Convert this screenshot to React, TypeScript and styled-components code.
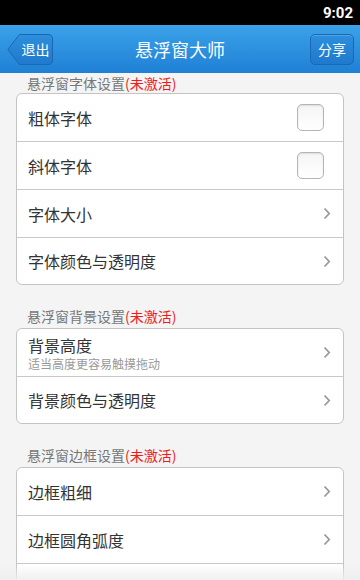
import React from 'react';
import styled, { createGlobalStyle } from 'styled-components';

const GlobalStyle = createGlobalStyle`
  html, body {
    margin: 0;
    padding: 0;
    background: #f4f4f4;
  }
  body {
    font-family: "Noto Sans CJK SC", "Noto Sans", "DejaVu Sans", sans-serif;
  }
`;

const Screen = styled.div`
  position: relative;
  width: 360px;
  height: 580px;
  overflow: hidden;
  background: #f4f4f4;
  display: flex;
  flex-direction: column;
`;

const StatusBar = styled.div`
  height: 25px;
  flex-shrink: 0;
  background: #000;
  display: flex;
  align-items: center;
  justify-content: flex-end;
  padding-right: 7px;
  color: #fff;
  font-family: "Roboto", "DejaVu Sans", sans-serif;
  font-weight: 700;
  font-size: 15px;
`;

const NavBar = styled.div`
  position: relative;
  height: 48px;
  flex-shrink: 0;
  background: linear-gradient(#3ba2e9, #1f80d5);
  display: flex;
  align-items: center;
  justify-content: space-between;
  padding: 0 6px 0 7px;
`;

const Title = styled.div`
  position: absolute;
  left: 0;
  right: 0;
  top: 0;
  bottom: 0;
  display: flex;
  align-items: center;
  justify-content: center;
  color: #fff;
  font-size: 18px;
  pointer-events: none;
`;

const BackButton = styled.button`
  position: relative;
  width: 46px;
  height: 31px;
  padding: 0 0 0 11px;
  border: none;
  background: none;
  color: #fff;
  font-family: inherit;
  font-size: 14px;
  display: flex;
  align-items: center;
  justify-content: center;

  svg {
    position: absolute;
    left: 0;
    top: 0;
  }
  span {
    position: relative;
  }
`;

const ShareButton = styled.button`
  position: relative;
  z-index: 1;
  width: 44px;
  height: 31px;
  padding: 0;
  border: 1px solid #1a68b2;
  border-radius: 5px;
  background: linear-gradient(#2d8fdd, #2079cc);
  box-shadow: inset 0 1px 0 rgba(255, 255, 255, 0.18);
  color: #fff;
  font-family: inherit;
  font-size: 14px;
`;

const Content = styled.div`
  position: relative;
  flex: 1;
  overflow: hidden;
`;

const Section = styled.div``;

const SectionHeader = styled.div<{ $first?: boolean }>`
  padding: ${({ $first }) => ($first ? '0 0 0 27px' : '22px 0 3px 27px')};
  line-height: ${({ $first }) => ($first ? '20px' : '18px')};
  font-size: 14px;
  color: #777;
`;

const Inactive = styled.span`
  color: #f21b1b;
`;

const Card = styled.div`
  margin: 0 16px;
  background: #fff;
  border: 1px solid #c4c4c4;
  border-radius: 6px;
  overflow: hidden;
`;

const Row = styled.div`
  height: 47px;
  display: flex;
  align-items: center;
  padding: 0 12px 0 11px;
  border-bottom: 1px solid #c8c8c8;

  &:last-child {
    height: 46px;
    border-bottom: none;
  }
`;

const RowText = styled.div`
  flex: 1;
  display: flex;
  flex-direction: column;
`;

const RowTitle = styled.div`
  font-size: 16px;
  line-height: 20px;
  color: #333;
`;

const RowSub = styled.div`
  font-size: 12px;
  line-height: 15px;
  color: #999;
  margin-top: 1px;
`;

const Checkbox = styled.div`
  width: 25px;
  height: 25px;
  margin-right: 7px;
  border: 1px solid #b5b5b5;
  border-radius: 5px;
  background: linear-gradient(#f5f5f5, #ffffff);
  box-shadow: inset 0 1px 2px rgba(0, 0, 0, 0.1);
`;

const TopShade = styled.div`
  position: absolute;
  left: 0;
  right: 0;
  top: 0;
  height: 6px;
  background: linear-gradient(rgba(244, 244, 244, 0.6), rgba(244, 244, 244, 0));
  pointer-events: none;
`;

const BottomShade = styled.div`
  position: absolute;
  left: 0;
  right: 0;
  bottom: 0;
  height: 16px;
  background: linear-gradient(rgba(240, 240, 240, 0), rgba(238, 238, 238, 0.9));
  pointer-events: none;
`;

const Chevron = () => (
  <svg width="8" height="13" viewBox="0 0 8 13">
    <path d="M1.5 1.5 L6.2 6.5 L1.5 11.5" fill="none" stroke="#9a9a9a" strokeWidth="1.8" />
  </svg>
);

const BackShape = () => (
  <svg width="46" height="31" viewBox="0 0 46 31">
    <defs>
      <linearGradient id="backFill" x1="0" y1="0" x2="0" y2="1">
        <stop offset="0" stopColor="#2d8fdd" />
        <stop offset="1" stopColor="#2079cc" />
      </linearGradient>
    </defs>
    <path
      d="M12.5 0.5 H41 Q45.5 0.5 45.5 5 V26 Q45.5 30.5 41 30.5 H12.5 L0.8 15.5 Z"
      fill="url(#backFill)"
      stroke="#1a68b2"
      strokeWidth="1"
      strokeLinejoin="round"
    />
  </svg>
);

type Item = { title: string; sub?: string; kind: 'check' | 'arrow' | 'none' };

const sections: { title: string; items: Item[] }[] = [
  {
    title: '悬浮窗字体设置',
    items: [
      { title: '粗体字体', kind: 'check' },
      { title: '斜体字体', kind: 'check' },
      { title: '字体大小', kind: 'arrow' },
      { title: '字体颜色与透明度', kind: 'arrow' },
    ],
  },
  {
    title: '悬浮窗背景设置',
    items: [
      { title: '背景高度', sub: '适当高度更容易触摸拖动', kind: 'arrow' },
      { title: '背景颜色与透明度', kind: 'arrow' },
    ],
  },
  {
    title: '悬浮窗边框设置',
    items: [
      { title: '边框粗细', kind: 'arrow' },
      { title: '边框圆角弧度', kind: 'arrow' },
      // scrolled below the fold, only its top edge shows
      { title: '', kind: 'none' },
    ],
  },
];

export default function App() {
  return (
    <>
      <GlobalStyle />
      <Screen>
        <StatusBar>9:02</StatusBar>
        <NavBar>
          <BackButton>
            <BackShape />
            <span>退出</span>
          </BackButton>
          <Title>悬浮窗大师</Title>
          <ShareButton>分享</ShareButton>
        </NavBar>
        <Content>
          {sections.map((section, i) => (
            <Section key={section.title}>
              <SectionHeader $first={i === 0}>
                {section.title}
                <Inactive>(未激活)</Inactive>
              </SectionHeader>
              <Card>
                {section.items.map((item, j) => (
                  <Row key={j}>
                    <RowText>
                      <RowTitle>{item.title}</RowTitle>
                      {item.sub && <RowSub>{item.sub}</RowSub>}
                    </RowText>
                    {item.kind === 'check' && <Checkbox />}
                    {item.kind === 'arrow' && <Chevron />}
                  </Row>
                ))}
              </Card>
            </Section>
          ))}
          <TopShade />
          <BottomShade />
        </Content>
      </Screen>
    </>
  );
}
